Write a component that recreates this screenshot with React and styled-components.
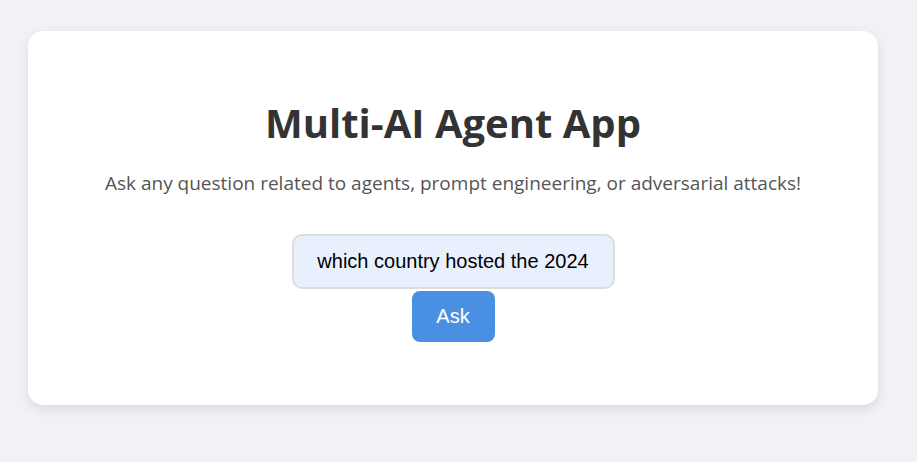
import React, { useState } from "react";
import styled, { createGlobalStyle } from "styled-components";

const Global = createGlobalStyle`
  html, body { margin: 0; padding: 0; background: #f0f2f5; }
  body { font-family: "Open Sans", "Noto Sans", sans-serif; }
`;

const Page = styled.div`
  padding: 31px 39px 57px 28px;
`;

const Card = styled.div`
  background: #ffffff;
  border-radius: 15px;
  box-shadow: 0 4px 12px rgba(0, 0, 0, 0.1);
  padding: 68px 0 63px;
  box-sizing: border-box;
  display: flex;
  flex-direction: column;
  align-items: center;
`;

const Title = styled.h1`
  margin: 0;
  font-size: 40px;
  line-height: 48px;
  font-weight: 700;
  color: #333333;
`;

const Subtitle = styled.p`
  margin: 23px 0 0;
  font-size: 19px;
  line-height: 26px;
  color: #555555;
`;

const Input = styled.input`
  margin-top: 38px;
  width: 323px;
  height: 55px;
  flex-shrink: 0;
  box-sizing: border-box;
  padding: 15px;
  border: 2px solid #dddddd;
  border-radius: 10px;
  background: #e8f0fe;
  font-family: "Liberation Sans", Arial, sans-serif;
  font-size: 20px;
  color: #000;
  text-align: center;
  outline: none;
`;

const Button = styled.button`
  margin-top: 2px;
  width: 83px;
  height: 51px;
  flex-shrink: 0;
  border: none;
  border-radius: 8px;
  background: #4a90e2;
  color: #ffffff;
  font-family: "Liberation Sans", Arial, sans-serif;
  font-size: 20px;
  cursor: pointer;
`;

export default function App() {
  const [q, setQ] = useState("which country hosted the 2024");
  return (
    <>
      <Global />
      <Page>
        <Card>
          <Title>Multi-AI Agent App</Title>
          <Subtitle>
            Ask any question related to agents, prompt engineering, or adversarial attacks!
          </Subtitle>
          <Input value={q} onChange={(e) => setQ(e.target.value)} />
          <Button>Ask</Button>
        </Card>
      </Page>
    </>
  );
}
